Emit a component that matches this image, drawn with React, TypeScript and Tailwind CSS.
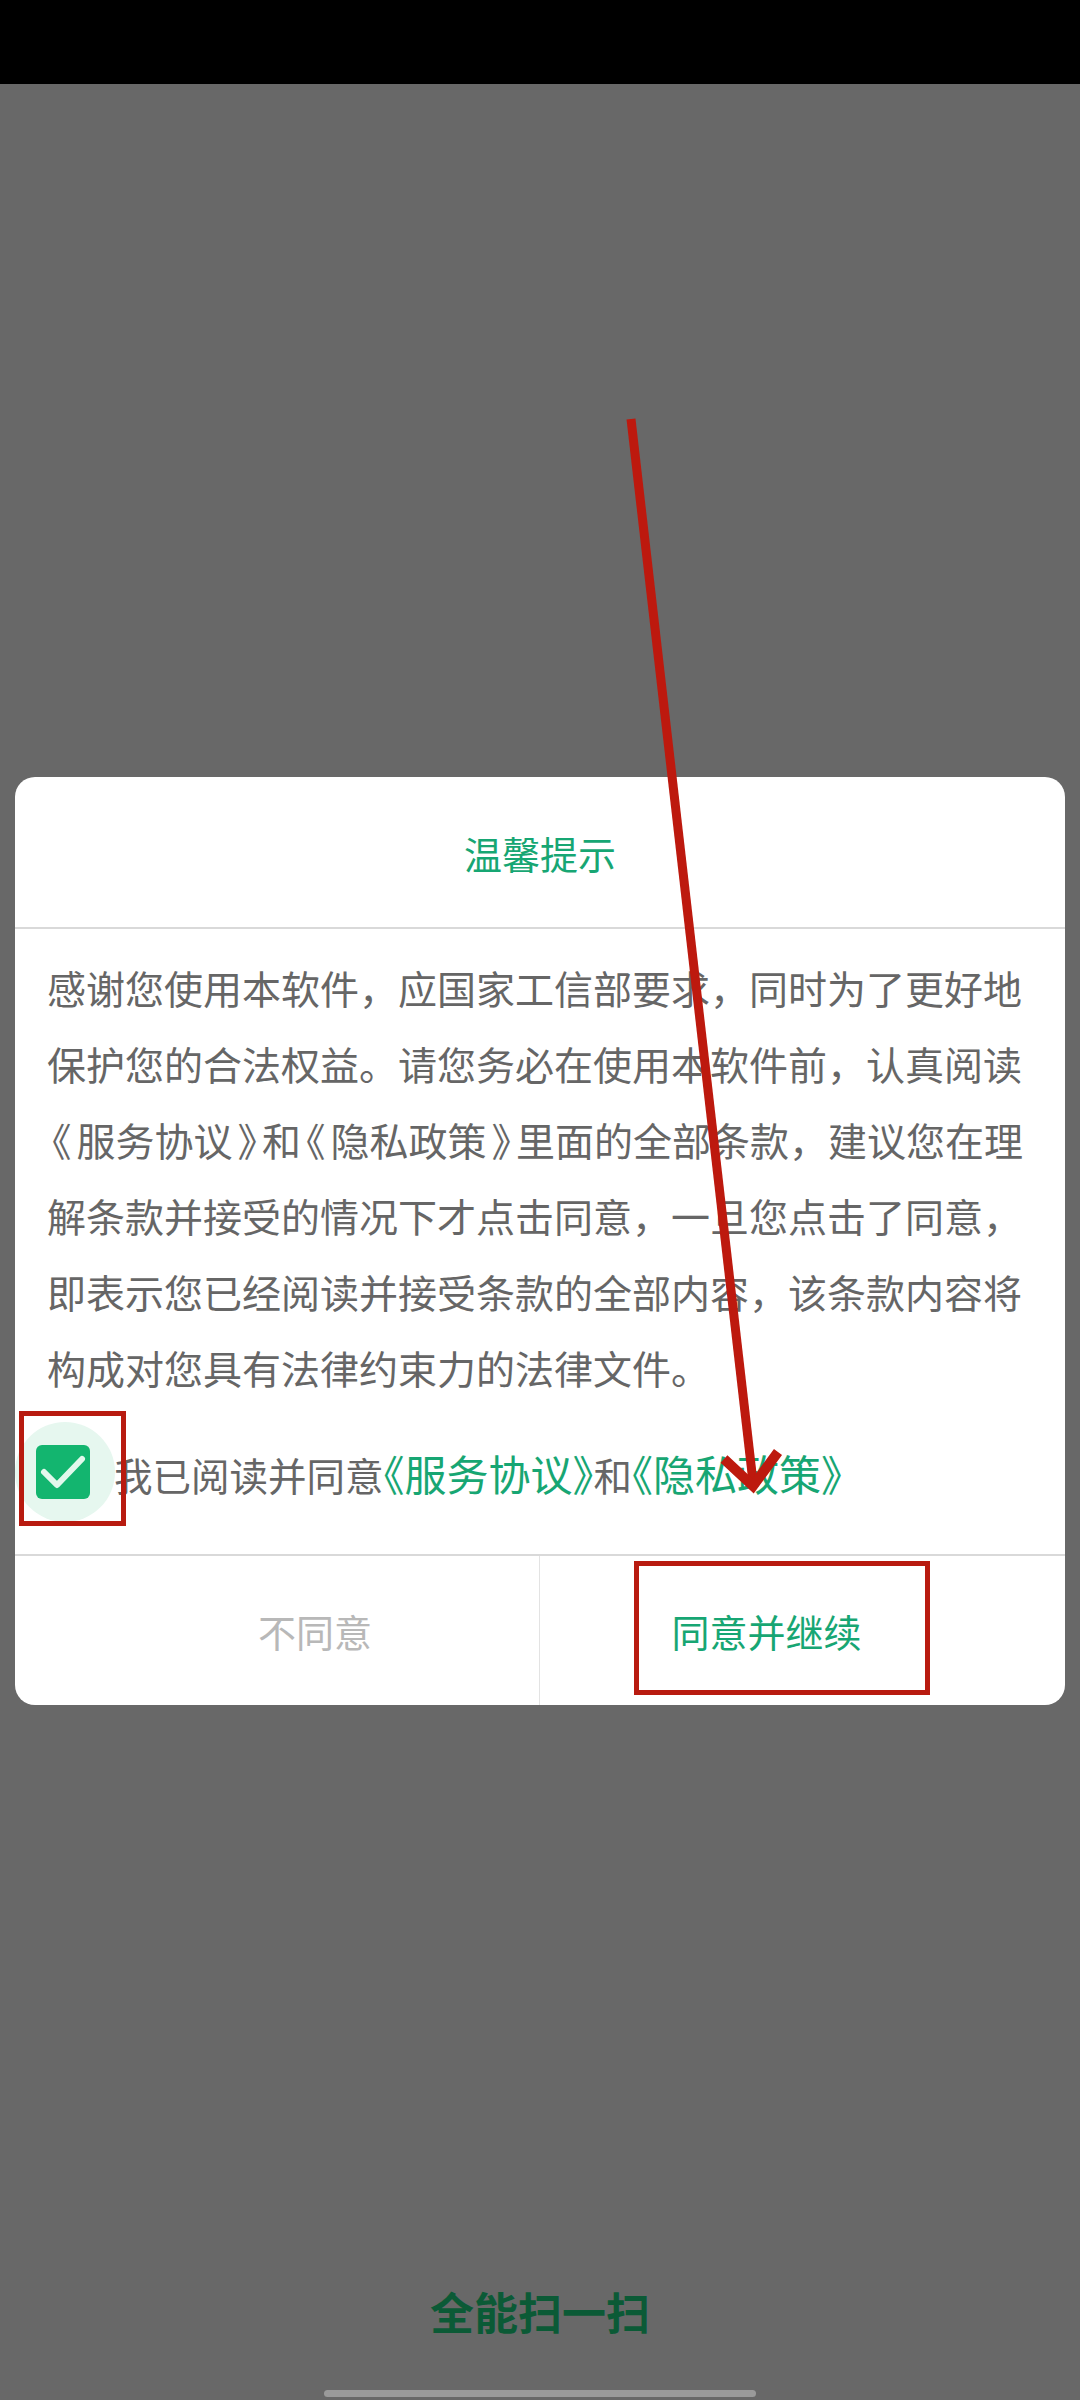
import type { ReactNode } from "react";

function H({ children, pad = false }: { children: ReactNode; pad?: boolean }) {
  return (
    <span className={pad ? "px-[5px] [font-feature-settings:'halt']" : "[font-feature-settings:'halt']"}>
      {children}
    </span>
  );
}

export default function App() {
  return (
    <div className="relative flex h-[2400px] w-[1080px] flex-col overflow-hidden bg-[#686868] font-['Noto_Sans_CJK_SC',sans-serif]">
      {/* status bar */}
      <div className="h-[84px] bg-black" />

      {/* privacy dialog */}
      <div className="mx-[15px] mt-[693px] overflow-hidden rounded-[20px] bg-white">
        <div className="flex h-[150px] items-center justify-center text-[38px] text-[#17a673]">
          温馨提示
        </div>
        <div className="h-[2px] bg-[#d9d9d9]" />

        <div className="px-[32px] pt-[20px] text-[39px] leading-[76px] text-[#666666]">
          <div className="whitespace-nowrap">感谢您使用本软件，应国家工信部要求，同时为了更好地</div>
          <div className="whitespace-nowrap">保护您的合法权益。请您务必在使用本软件前，认真阅读</div>
          <div className="whitespace-nowrap">
            <H pad>《</H>服务协议<H pad>》</H>和<H pad>《</H>隐私政策<H pad>》</H>里面的全部条款，建议您在理
          </div>
          <div className="whitespace-nowrap">解条款并接受的情况下才点击同意，一旦您点击了同意，</div>
          <div className="whitespace-nowrap">即表示您已经阅读并接受条款的全部内容，该条款内容将</div>
          <div className="whitespace-nowrap">构成对您具有法律约束力的法律文件。</div>
        </div>

        <div className="relative mt-[17px] mb-[32px] flex h-[100px] items-center">
          <div className="absolute left-0 top-0 h-[100px] w-[100px] rounded-full bg-[#e6f7ef]" />
          <div className="relative ml-[21px] h-[54px] w-[54px] rounded-[6px] bg-[#13b56f]">
            <svg width="54" height="54" viewBox="0 0 54 54" fill="none">
              <path d="M8 27L21 40L46 14" stroke="#e2f8ec" strokeWidth="6" strokeLinecap="round" strokeLinejoin="round" />
            </svg>
          </div>
          <div className="relative ml-[24px] whitespace-nowrap text-[38.5px] text-[#666666]">
            我已阅读并同意
            <span className="text-[42px] text-[#17a673]">
              <H>《</H>服务协议<H>》</H>
            </span>
            和
            <span className="text-[42px] text-[#17a673]">
              <H>《</H>隐私政策<H>》</H>
            </span>
          </div>
        </div>

        <div className="h-[2px] bg-[#d9d9d9]" />
        <div className="flex h-[149px]">
          <div className="flex w-[524px] items-center justify-center pl-[76px] text-[38px] text-[#b8b8b8]">
            不同意
          </div>
          <div className="w-[1px] bg-[#e3e3e3]" />
          <div className="flex flex-1 items-center justify-center pr-[72px] text-[38px] text-[#17a673]">
            同意并继续
          </div>
        </div>
      </div>

      {/* app name under the scrim */}
      <div className="mt-[576px] text-center text-[44px] font-bold leading-[60px] text-[#0b5a36]">
        全能扫一扫
      </div>
      <div className="mt-[49px] h-[7px] w-[432px] self-center rounded-full bg-[#9a9a9a]" />

      {/* annotations */}
      <div className="absolute left-[19px] top-[1411px] h-[115px] w-[107px] border-[5px] border-[#b81b10]" />
      <div className="absolute left-[634px] top-[1561px] h-[134px] w-[296px] border-[5px] border-[#b81b10]" />
      <svg className="absolute left-0 top-0" width="1080" height="2400" viewBox="0 0 1080 2400" fill="none">
        <path d="M631 419L753 1482" stroke="#bd190e" strokeWidth="9" />
        <path d="M724 1459L753 1486L778 1452" stroke="#bd190e" strokeWidth="10" strokeLinejoin="miter" />
      </svg>
    </div>
  );
}
